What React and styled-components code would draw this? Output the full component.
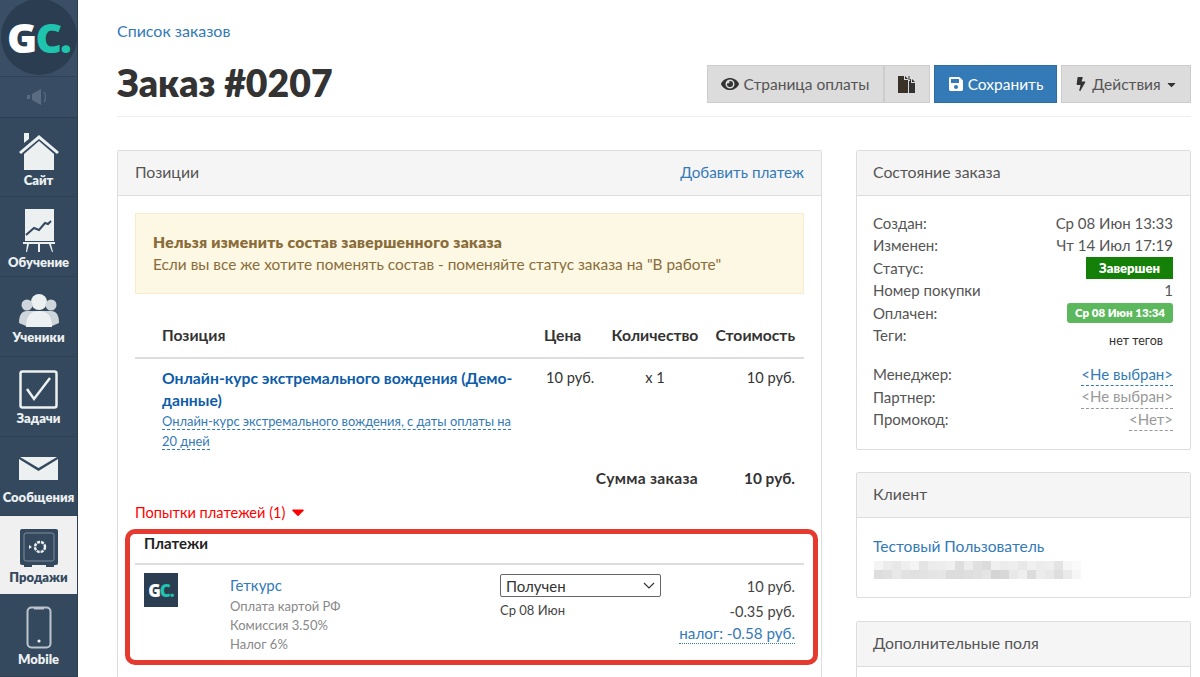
import React from 'react';
import styled, { createGlobalStyle } from 'styled-components';
import { FaEye, FaSave, FaBolt, FaCaretDown } from 'react-icons/fa';

const Global = createGlobalStyle`
  html, body { margin: 0; padding: 0; background: #fff; }
  body { font-family: Lato, "Open Sans", sans-serif; color: #333; font-size: 15px; overflow: hidden; }
  * { box-sizing: border-box; }
`;
const Page = styled.div`display: flex; width: 1200px; height: 677px; overflow: hidden;`;
const Side = styled.nav`width: 78px; flex: none; background: #34495e; height: 677px; overflow: hidden; border-right: 1px solid #2c3e50;`;
const LogoCell = styled.div`height: 77px; display: flex; align-items: center; justify-content: center; background: #3a4f65; border-bottom: 1px solid #2f4256; overflow: hidden;`;
const LogoDisc = styled.div`width: 76px; height: 76px; flex: none; border-radius: 50%; background: #2a3d51; display: flex; align-items: center; justify-content: center; font-family: "Open Sans", sans-serif; font-weight: 800; font-size: 41px; letter-spacing: -2px; color: #fff; margin-top: -3px;`;
const Teal = styled.span`color: #1fc4ae;`;
const Sound = styled.div`height: 41px; display: flex; align-items: center; justify-content: center; border-bottom: 1px solid #2c3e50; background: #384d63;`;
const NavItem = styled.div`
  height: ${p => p.$h}px; display: flex; flex-direction: column; align-items: center; justify-content: flex-start;
  padding-top: ${p => p.$top}px; border-bottom: 1px solid ${p => p.$active ? '#eee' : '#2e4155'};
  background: ${p => p.$active ? '#f0f0f0' : '#34495e'};
  color: ${p => p.$active ? '#34495e' : '#ecf0f1'};
  font-size: 13px; font-weight: 800; gap: ${p => p.$gap ?? 2}px; line-height: 15px; white-space: nowrap;
`;
const Main = styled.main`flex: 1; padding: 0 9px 0 39px; min-width: 0;`;
const Crumb = styled.a`display: block; color: #337ab7; font-size: 16px; line-height: 20px; padding-top: 21px;`;
const Head = styled.header`display: flex; justify-content: space-between; align-items: flex-start; height: 76px; padding-top: 13px; border-bottom: 1px solid #eee; margin-bottom: 33px;`;
const Title = styled.h1`margin: 0; font-size: 37.4px; font-weight: 800; color: #333; line-height: 58px;`;
const Tools = styled.div`display: flex; padding-top: 11px;`;
const Tool = styled.button`
  height: 38px; border: 1px solid ${p => p.$primary ? '#2e6da4' : '#ccc'}; background: ${p => p.$primary ? '#337ab7' : '#dcdcdc'};
  color: ${p => p.$primary ? '#fff' : '#555'}; font: 15.5px Lato, sans-serif; padding: 0; display: flex; align-items: center; gap: 4px;
  margin-left: ${p => p.$ml || 0}px; width: ${p => p.$w}px; justify-content: center;
`;
const Columns = styled.div`display: flex; justify-content: space-between; align-items: flex-start;`;
const Left = styled.div`width: 705px; flex: none;`;
const Right = styled.div`width: 335px; flex: none; display: flex; flex-direction: column; gap: 22px;`;
const Panel = styled.section`border: 1px solid #ddd; border-radius: 2px; background: #fff;`;
const PanelHead = styled.div`height: 45px; background: #f5f5f5; border-bottom: 1px solid #ddd; display: flex; justify-content: space-between; align-items: center; padding: 0 17px 3px; color: #555; font-size: 15.8px;`;
const RightHead = styled(PanelHead)`padding-left: 16px; padding-bottom: ${p => p.$pb ?? 3}px;`;
const HeadLink = styled.a`color: #337ab7; font-size: 15.2px;`;
const Link = styled.a`color: ${p => p.$muted ? '#999' : '#337ab7'}; ${p => p.$dash ? `border-bottom: 1px dashed ${p.$muted ? '#999' : '#337ab7'};` : ''}`;
const PanelBody = styled.div`padding: 17px 17px 40px;`;
const Alert = styled.div`background: #fcf8e3; border: 1px solid #faebcc; color: #8a6d3b; padding: 17px 17px 0; height: 81px; line-height: 22px; font-size: 15.4px;`;
const AlertTitle = styled.div`font-weight: 800; font-size: 15.6px; letter-spacing: 0.3px;`;
const Grid = styled.div`display: grid; grid-template-columns: 374px 70px 98px 100px; padding-left: 27px;`;
const HeadRow = styled(Grid)`margin-top: 30px; height: 35px; border-bottom: 2px solid #ddd; font-weight: 700; font-size: 15.7px; line-height: 22px; color: #333;`;
const Cell = styled.div`text-align: ${p => p.$a || 'left'}; padding-right: ${p => p.$pr ?? 0}px; padding-left: ${p => p.$pl ?? 0}px;`;
const ItemRow = styled(Grid)`padding-top: 8px; height: 95px; font-size: 14.6px; line-height: 22px;`;
const ItemName = styled.a`display: block; color: #0d5ca8; font-weight: 700; font-size: 15.7px; width: 352px; line-height: 22px;`;
const ItemNote = styled.a`color: #337ab7; font-size: 12.9px; line-height: 19px; display: inline; border-bottom: 1px dashed #337ab7;`;
const Note = styled.div`width: 356px; line-height: 19px;`;
const Total = styled.div`display: flex; justify-content: flex-end; font-weight: 700; font-size: 15.4px; height: 44px; align-items: center; padding-right: 9px; margin-top: 2px;`;
const TotalLabel = styled.span`margin-right: 46px; font-size: 15.6px; letter-spacing: 0.3px;`;
const Attempts = styled.div`color: #f00; font-size: 14.6px; display: flex; align-items: center; gap: 3px; height: 20px; margin-top: 2px;`;
const Highlight = styled.div`margin: 7px -14px 0 -10px; border: 5px solid #e53a30; border-radius: 10px; height: 136px; padding-left: 5px;`;
const PayTitle = styled.div`font-weight: 700; font-size: 15px; line-height: 18px; padding-left: 9px; height: 29px; color: #222;`;
const PayRow = styled.div`display: grid; grid-template-columns: 86px 270px 161px 1fr; border-top: 2px solid #ddd; padding: 9px 9px 0 9px; margin-right: 9px; font-size: 14px;`;
const PayLogo = styled.div`width: 34px; height: 34px; background: #2a3d51; color: #fff; font-family: "Open Sans", sans-serif; font-weight: 800; font-size: 17px; letter-spacing: -1px; display: flex; align-items: center; justify-content: center; margin-top: -1px;`;
const PayName = styled.a`display: block; color: #337ab7; font-size: 15px; line-height: 22px; margin-bottom: 1px;`;
const PayNote = styled.div`color: #888; font-size: 13px; line-height: 19px;`;
const Fake = styled.div`width: 161px; height: 23px; border: 1px solid #666; border-radius: 2px; display: flex; justify-content: space-between; align-items: center; padding: 0 5px; font-size: 15px; color: #333;`;
const PayDate = styled.div`font-size: 13px; color: #444; line-height: 24px; margin-top: 1px;`;
const Amounts = styled.div`text-align: right; line-height: 25px; font-size: 14.6px; color: #444;`;
const Tax = styled.a`display: block; width: fit-content; margin: -1px 0 0 auto; line-height: 20px; font-size: 15.2px; color: #337ab7; border-bottom: 1px dotted #337ab7;`;
const Info = styled.div`padding: 16px 17px 18px 16px; font-size: 15px; line-height: 22.4px; color: #555;`;
const Line = styled.div`display: flex; justify-content: space-between; align-items: center; height: 22.4px;`;
const Status = styled.span`background: #158007; color: #fff; font-weight: 800; font-size: 13px; width: 87px; height: 22px; display: flex; align-items: center; justify-content: center;`;
const Paid = styled.span`background: #5cb85c; color: #fff; font-weight: 800; font-size: 11.5px; width: 106px; height: 20px; border-radius: 3px; display: flex; align-items: center; justify-content: center;`;
const Tags = styled.span`font-size: 12.5px; color: #333; padding: 13px 10px 0 0;`;
const Spacer = styled.div`height: 17px;`;
const ClientBody = styled.div`padding: 19px 17px 18px 16px; font-size: 15.6px; line-height: 18px;`;
const BlurGrid = styled.div`display: grid; grid-template-columns: repeat(23, 9px); grid-auto-rows: 9px; margin-top: 6px; width: 207px; margin-left: 1px;`;
const BlurCell = styled.div`background: ${p => p.$c};`;
const Third = styled(Panel)`margin-top: 1px; height: 70px;`;

const blur = ['f4f4f4','ececec','e8e8e8','eeeeee','f4f4f4','e4e4e4','ececec','ededed','f0f0f0','dedede','ececec','e0e0e0','dcdcdc','f0f0f0','ececec','eeeeee','e8e8e8','f0f0f0','ececec','eeeeee','e4e4e4','f6f6f6','fafafa',
  'dddddd','e0e0e0','e8e8e8','e2e2e2','e0e0e0','e2e2e2','e4e4e4','e6e6e6','dcdcdc','dcdcdc','dedede','e0e0e0','e4e4e4','d4d4d4','d8d8d8','e8e8e8','eeeeee','dcdcdc','ececec','e8e8e8','dedede','eaeaea','f6f6f6'];

const Svg = ({ children, w = 44, h = 44, vb = '0 0 44 44' }) => <svg width={w} height={h} viewBox={vb}>{children}</svg>;

export default function App() {
  return (
    <Page>
      <Global />
      <Side>
        <LogoCell><LogoDisc>G<Teal>C.</Teal></LogoDisc></LogoCell>
        <Sound>
          <Svg w={26} h={18} vb="0 0 26 18"><path d="M1 7h3v4H1zM6 6l9-5v16l-9-5z" fill="#5a6d80" /><path d="M18 4q3 5 0 10" stroke="#5a6d80" strokeWidth="1.2" fill="none" /></Svg>
        </Sound>
        <NavItem $h={79} $top={14} $gap={1}>
          <Svg w={42} h={40} vb="0 0 42 40"><path d="M6 1h5v6l-5 4z" fill="#ecf0f1" /><path d="M1 20L21 3l20 17-2 2L21 7 3 22z" fill="#ecf0f1" /><path d="M6 22L21 9l15 13v16H6z" fill="#ecf0f1" /></Svg>
          Сайт
        </NavItem>
        <NavItem $h={80} $top={12} $gap={2}>
          <Svg w={32} h={44} vb="0 0 32 44"><path d="M2 0h29v32H2z" fill="#ecf0f1" /><path d="M3 26l8-7 5 2 6-7 3 1 3-3" stroke="#34495e" strokeWidth="2" fill="none" /><path d="M0 33h32v2H0zM4 35h2l-2 8H3zM15 35h2v8h-2zM26 35h2l2 8h-1z" fill="#ecf0f1" /></Svg>
          Обучение
        </NavItem>
        <NavItem $h={80} $top={16} $gap={1}>
          <Svg w={42} h={36} vb="0 0 42 36"><circle cx="21" cy="9" r="8" fill="#ecf0f1" /><circle cx="9" cy="12" r="5.5" fill="#cfd6db" /><circle cx="33" cy="12" r="5.5" fill="#cfd6db" /><path d="M1 30q0-12 8-12h24q8 0 8 12l-7 3H8z" fill="#cfd6db" /><path d="M8 34q0-16 13-16t13 16z" fill="#ecf0f1" /></Svg>
          Ученики
        </NavItem>
        <NavItem $h={80} $top={13} $gap={2}>
          <Svg w={39} h={39} vb="0 0 39 39"><rect x="1.5" y="1.5" width="36" height="36" rx="2" fill="#34495e" stroke="#ecf0f1" strokeWidth="2.5" /><path d="M8 19l7 10L31 8" stroke="#ecf0f1" strokeWidth="2.5" fill="none" /></Svg>
          Задачи
        </NavItem>
        <NavItem $h={79} $top={20} $gap={10}>
          <Svg w={39} h={23} vb="0 0 39 23"><path d="M1 0h37L19.5 11zM0 2l19.5 12L39 2v21H0z" fill="#ecf0f1" /></Svg>
          Сообщения
        </NavItem>
        <NavItem $h={78} $top={13} $active>
          <Svg w={38} h={39} vb="0 0 38 39"><rect width="38" height="36" rx="2" fill="#34495e" /><rect x="4" y="4" width="30" height="28" rx="2" fill="none" stroke="#7d8c9b" strokeWidth="1" /><circle cx="20" cy="18" r="5" fill="none" stroke="#ecf0f1" strokeWidth="2.5" strokeDasharray="3 1" /><path d="M9 16l3 2-3 2z" fill="#ecf0f1" /><path d="M4 36h8v2H4zM26 36h8v2h-8z" fill="#34495e" /></Svg>
          Продажи
        </NavItem>
        <NavItem $h={83} $top={12} $gap={3}>
          <Svg w={26} h={43} vb="0 0 26 43"><rect x="1.5" y="1.5" width="23" height="40" rx="4" fill="none" stroke="#bcc5cd" strokeWidth="2" /><path d="M8 2h10v1.5H8z" fill="#bcc5cd" /><circle cx="13" cy="35" r="1.6" fill="#ecf0f1" /></Svg>
          Mobile
        </NavItem>
      </Side>
      <Main>
        <Crumb>Список заказов</Crumb>
        <Head>
          <Title>Заказ #0207</Title>
          <Tools>
            <Tool $w={177}><FaEye size={18} color="#333" /> Страница оплаты</Tool>
            <Tool $w={46}>
              <Svg w={18} h={17} vb="0 0 18 17"><path d="M0 0h6v4h4v13H0zM7 0l3 3H7z" fill="#3a3228" /><path d="M10.5 0h1v4h-1zM12 3h1v4h4v10h-6V5h1z" fill="#333" /><path d="M14 3l3 3h-3z" fill="#333" /></Svg>
            </Tool>
            <Tool $primary $w={123} $ml={4}><FaSave size={16} /> Сохранить</Tool>
            <Tool $w={130} $ml={4}><FaBolt size={14} color="#333" /> Действия <FaCaretDown size={13} color="#333" /></Tool>
          </Tools>
        </Head>
        <Columns>
          <Left>
            <Panel>
              <PanelHead>Позиции <HeadLink>Добавить платеж</HeadLink></PanelHead>
              <PanelBody>
                <Alert>
                  <AlertTitle>Нельзя изменить состав завершенного заказа</AlertTitle>
                  Если вы все же хотите поменять состав - поменяйте статус заказа на "В работе"
                </Alert>
                <HeadRow>
                  <div>Позиция</div>
                  <Cell $pl={8}>Цена</Cell>
                  <Cell $a="center">Количество</Cell>
                  <Cell $a="right" $pr={9}>Стоимость</Cell>
                </HeadRow>
                <ItemRow>
                  <div>
                    <ItemName>Онлайн-курс экстремального вождения (Демо-данные)</ItemName>
                    <Note><ItemNote>Онлайн-курс экстремального вождения, с даты оплаты на 20 дней</ItemNote></Note>
                  </div>
                  <Cell $pl={10}>10 руб.</Cell>
                  <Cell $a="center">x 1</Cell>
                  <Cell $a="right" $pr={9}>10 руб.</Cell>
                </ItemRow>
                <Total><TotalLabel>Сумма заказа</TotalLabel>10 руб.</Total>
                <Attempts>Попытки платежей (1) <FaCaretDown size={20} /></Attempts>
                <Highlight>
                  <PayTitle>Платежи</PayTitle>
                  <PayRow>
                    <PayLogo>G<Teal>C.</Teal></PayLogo>
                    <div>
                      <PayName>Геткурс</PayName>
                      <PayNote>Оплата картой РФ</PayNote>
                      <PayNote>Комиссия 3.50%</PayNote>
                      <PayNote>Налог 6%</PayNote>
                    </div>
                    <div>
                      <Fake>Получен <Svg w={12} h={8} vb="0 0 12 8"><path d="M1 1l5 5 5-5" stroke="#333" strokeWidth="1.2" fill="none" /></Svg></Fake>
                      <PayDate>Ср 08 Июн</PayDate>
                    </div>
                    <Amounts>
                      <div>10 руб.</div>
                      <div>-0.35 руб.</div>
                      <Tax>налог: -0.58 руб.</Tax>
                    </Amounts>
                  </PayRow>
                </Highlight>
              </PanelBody>
            </Panel>
          </Left>
          <Right>
            <Panel>
              <RightHead>Состояние заказа</RightHead>
              <Info>
                <Line><span>Создан:</span><span>Ср 08 Июн 13:33</span></Line>
                <Line><span>Изменен:</span><span>Чт 14 Июл 17:19</span></Line>
                <Line><span>Статус:</span><Status>Завершен</Status></Line>
                <Line><span>Номер покупки</span><span>1</span></Line>
                <Line><span>Оплачен:</span><Paid>Ср 08 Июн 13:34</Paid></Line>
                <Line><span>Теги:</span><Tags>нет тегов</Tags></Line>
                <Spacer />
                <Line><span>Менеджер:</span><Link $dash>&lt;Не выбран&gt;</Link></Line>
                <Line><span>Партнер:</span><Link $dash $muted>&lt;Не выбран&gt;</Link></Line>
                <Line><span>Промокод:</span><Link $dash $muted>&lt;Нет&gt;</Link></Line>
              </Info>
            </Panel>
            <Panel>
              <RightHead $pb={2}>Клиент</RightHead>
              <ClientBody>
                <Link>Тестовый Пользователь</Link>
                <BlurGrid>{blur.map((c, i) => <BlurCell key={i} $c={`#${c}`} />)}</BlurGrid>
              </ClientBody>
            </Panel>
            <Third>
              <RightHead $pb={2}>Дополнительные поля</RightHead>
            </Third>
          </Right>
        </Columns>
      </Main>
    </Page>
  );
}
